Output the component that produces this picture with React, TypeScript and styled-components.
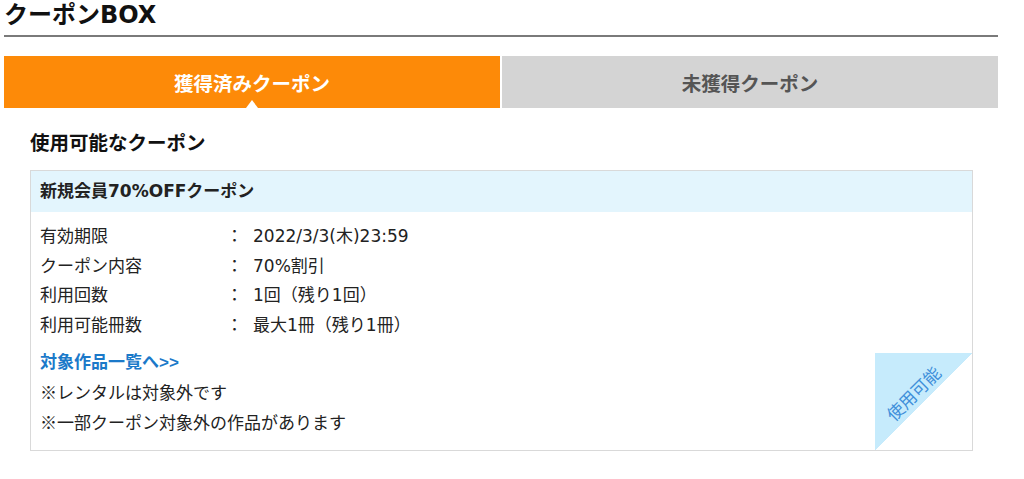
import React from "react";
import styled, { createGlobalStyle } from "styled-components";

const GlobalStyle = createGlobalStyle`
    body {
        margin: 0;
        background: #fff;
        font-family: "DejaVu Sans", "Noto Sans CJK JP", sans-serif;
        color: #222;
    }
`;

const Page = styled.div`
    width: 994px;
    margin-left: 4px;
`;

const Title = styled.h1`
    margin: 0;
    height: 31px;
    padding-bottom: 4px;
    font-size: 24px;
    line-height: 31px;
    font-weight: 700;
    color: #111;
    border-bottom: 2px solid #7a7a7a;
`;

const Tabs = styled.div`
    display: grid;
    grid-template-columns: 496px 1fr;
    gap: 2px;
    margin-top: 19px;
    height: 52px;
`;

const Tab = styled.div<{ active?: boolean }>`
    position: relative;
    display: flex;
    align-items: center;
    justify-content: center;
    font-size: 19.5px;
    font-weight: 700;
    background: ${p => (p.active ? "#fd8a08" : "#d4d4d4")};
    color: ${p => (p.active ? "#fff" : "#555")};
    ${p =>
        p.active
            ? `&::after {
        content: "";
        position: absolute;
        left: 50%;
        bottom: 0;
        margin-left: -6px;
        border-left: 6px solid transparent;
        border-right: 6px solid transparent;
        border-bottom: 8px solid #fff;
    }`
            : ""}
`;

const Section = styled.section`
    padding: 0 25px 0 26px;
`;

const Heading = styled.h2`
    margin: 22px 0 12px;
    font-size: 19.5px;
    line-height: 28px;
    font-weight: 700;
    color: #111;
`;

const Card = styled.div`
    position: relative;
    border: 1px solid #d9d9d9;
    overflow: hidden;
`;

const CardHeader = styled.div`
    height: 41px;
    padding-left: 9px;
    background: #e3f5fd;
    font-size: 17px;
    line-height: 41px;
    font-weight: 700;
    color: #222;
`;

const CardBody = styled.div`
    padding: 10px 9px 12px;
    font-size: 17px;
`;

const Row = styled.div`
    display: flex;
    line-height: 29.5px;
`;

const Label = styled.span`
    width: 186px;
`;

const Colon = styled.span`
    width: 27px;
`;

const LinkText = styled.a`
    display: block;
    margin-top: 8px;
    height: 30px;
    line-height: 30px;
    font-family: "Liberation Sans", "Noto Sans CJK JP", sans-serif;
    font-weight: 700;
    color: #1b79c9;
    text-decoration: none;
`;

const Note = styled.p`
    margin: 0;
    height: 30px;
    line-height: 30px;
`;

const Mark = styled.span`
    font-family: "Noto Sans CJK JP", sans-serif;
    line-height: 1;
`;

const Corner = styled.div`
    position: absolute;
    right: -1px;
    bottom: -1px;
    width: 98px;
    height: 98px;
    background: linear-gradient(to bottom right, #c6ebfc 50%, #fff 50%);
`;

const CornerText = styled.span`
    position: absolute;
    left: 38px;
    top: 40px;
    transform: translate(-50%, -50%) rotate(-45deg);
    white-space: nowrap;
    font-size: 17px;
    color: #3f8fda;
`;

const rows = [
    ["有効期限", "2022/3/3(木)23:59"],
    ["クーポン内容", "70%割引"],
    ["利用回数", "1回（残り1回）"],
    ["利用可能冊数", "最大1冊（残り1冊）"],
];

export default function App() {
    return (
        <Page>
            <GlobalStyle />
            <Title>クーポンBOX</Title>
            <Tabs>
                <Tab active>獲得済みクーポン</Tab>
                <Tab>未獲得クーポン</Tab>
            </Tabs>
            <Section>
                <Heading>使用可能なクーポン</Heading>
                <Card>
                    <CardHeader>新規会員70%OFFクーポン</CardHeader>
                    <CardBody>
                        {rows.map(([label, value]) => (
                            <Row key={label}>
                                <Label>{label}</Label>
                                <Colon>：</Colon>
                                <span>{value}</span>
                            </Row>
                        ))}
                        <LinkText href="#">対象作品一覧へ&gt;&gt;</LinkText>
                        <Note><Mark>※</Mark>レンタルは対象外です</Note>
                        <Note><Mark>※</Mark>一部クーポン対象外の作品があります</Note>
                    </CardBody>
                    <Corner>
                        <CornerText>使用可能</CornerText>
                    </Corner>
                </Card>
            </Section>
        </Page>
    );
}
